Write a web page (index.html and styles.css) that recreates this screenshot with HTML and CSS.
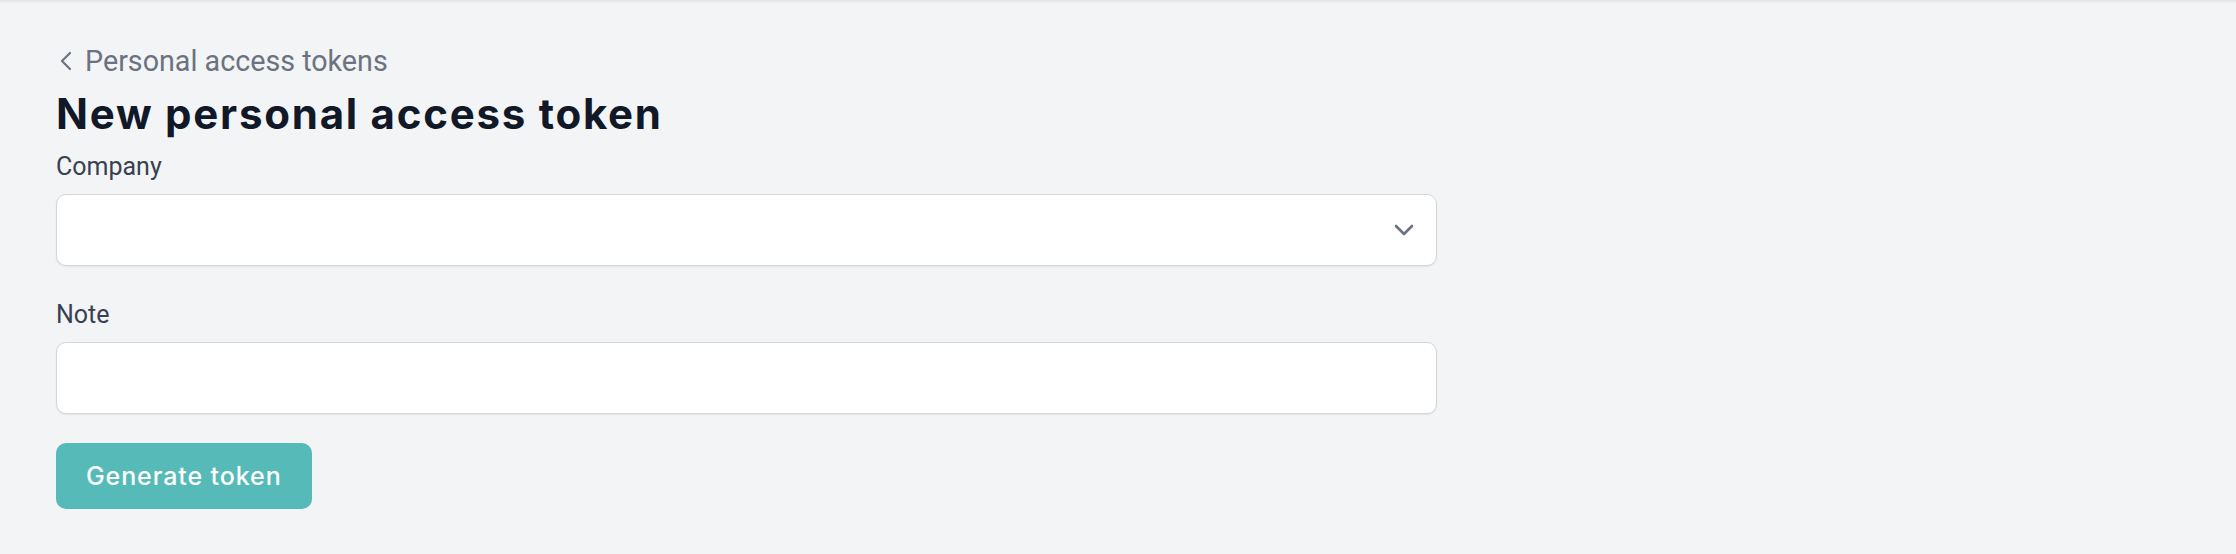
FILE: index.html
```html
<!DOCTYPE html>
<html lang="en">
<head>
  <meta charset="UTF-8" />
  <meta name="viewport" content="width=device-width, initial-scale=1.0" />
  <title>New personal access token</title>
  <link rel="stylesheet" href="styles.css">
</head>
<body>
  <div class="topbar"></div>

  <main class="page">
    <!-- Back link -->
    <a class="back-link" href="#">
      <svg class="back-icon" viewBox="0 0 14 20" width="14" height="20" aria-hidden="true">
        <path d="M11 2 L3 10 L11 18" fill="none" stroke="currentColor" stroke-width="2.2" stroke-linecap="round" stroke-linejoin="round"/>
      </svg>
      <span>Personal access tokens</span>
    </a>

    <h1 class="title">New personal access token</h1>

    <form class="token-form" onsubmit="return false">
      <div class="field">
        <label class="field-label" for="company">Company</label>
        <div class="select-wrap">
          <select id="company" class="field-input"></select>
          <svg class="select-icon" viewBox="0 0 20 12" width="20" height="12" aria-hidden="true">
            <path d="M2 2 L10 10 L18 2" fill="none" stroke="currentColor" stroke-width="2.6" stroke-linecap="round" stroke-linejoin="round"/>
          </svg>
        </div>
      </div>

      <div class="field">
        <label class="field-label" for="note">Note</label>
        <input id="note" class="field-input" type="text" />
      </div>

      <button class="btn-primary" type="submit">Generate token</button>
    </form>
  </main>
</body>
</html>
```

FILE: styles.css
```css
* {
  margin: 0;
  padding: 0;
  box-sizing: border-box;
}

body {
  font-family: Roboto, "Liberation Sans", sans-serif;
  background-color: #f3f4f6;
  color: #374151;
  min-height: 100vh;
}

.topbar {
  height: 4px;
  background: linear-gradient(#e3e4e8, #f3f4f6);
}

.page {
  padding: 37px 56px 0;
}

.back-link {
  display: flex;
  align-items: center;
  gap: 12px;
  height: 40px;
  color: #6b7280;
  font-size: 28.7px;
  text-decoration: none;
  width: max-content;
}

.back-icon {
  margin-left: 3px;
}

.title {
  margin-top: 9px;
  font-family: Inter, "Open Sans", sans-serif;
  font-size: 42px;
  line-height: 48px;
  font-weight: 700;
  letter-spacing: 1.75px;
  color: #111827;
}

.token-form {
  margin-top: 11px;
  width: 1381px;
}

.field {
  display: flex;
  flex-direction: column;
  gap: 10px;
  margin-bottom: 31px;
}

.field:last-of-type {
  margin-bottom: 29px;
}

.field-label {
  font-size: 25px;
  line-height: 35px;
  color: #374151;
}

.field-input {
  width: 100%;
  height: 72px;
  background-color: #fff;
  border: 1px solid #d4d6dc;
  border-radius: 10px;
  box-shadow: 0 1px 2px rgba(0, 0, 0, 0.07);
  font: inherit;
  font-size: 25px;
  padding: 0 20px;
  appearance: none;
  -webkit-appearance: none;
  outline: none;
}

.select-wrap {
  position: relative;
}

.select-icon {
  position: absolute;
  right: 23px;
  top: 30px;
  color: #6b7280;
  pointer-events: none;
}

.btn-primary {
  height: 66px;
  padding: 0 30px;
  background-color: #56bbb8;
  border: none;
  border-radius: 10px;
  color: #fff;
  font-family: Inter, "Open Sans", sans-serif;
  font-size: 25px;
  font-weight: 500;
  letter-spacing: 0.9px;
  cursor: pointer;
}
```
